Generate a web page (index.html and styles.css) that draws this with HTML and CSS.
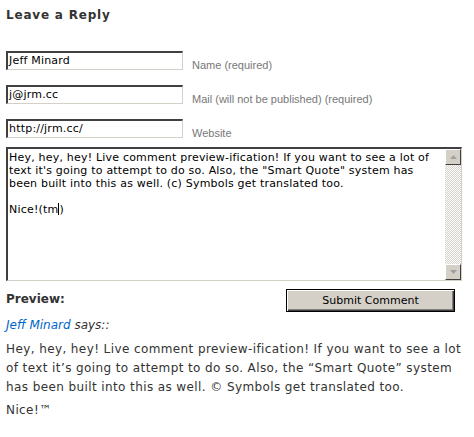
FILE: index.html
```html
<!DOCTYPE html>
<html>
<head>
<meta charset="utf-8">
<link rel="stylesheet" href="styles.css">
</head>
<body>
<div class="wrap">
  <h3 class="title">Leave a Reply</h3>
  <div class="row">
    <div class="field">Jeff Minard</div>
    <span class="label">Name (required)</span>
  </div>
  <div class="row">
    <div class="field">j@jrm.cc</div>
    <span class="label">Mail (will not be published) (required)</span>
  </div>
  <div class="row">
    <div class="field">http://jrm.cc/</div>
    <span class="label">Website</span>
  </div>
  <div class="textarea">
    <div class="ta-text">Hey, hey, hey! Live comment preview-ification! If you want to see a lot of text it's going to attempt to do so. Also, the "Smart Quote" system has been built into this as well. (c) Symbols get translated too.<br><br>Nice!(tm<span class="caret"></span>)</div>
    <div class="scrollbar">
      <div class="sb-btn"><svg width="7" height="4" viewBox="0 0 7 4"><path d="M3.5 0 L7 4 L0 4 Z" fill="#a0a0a0"/></svg></div>
      <div class="sb-track"></div>
      <div class="sb-btn"><svg width="7" height="4" viewBox="0 0 7 4"><path d="M0 0 L7 0 L3.5 4 Z" fill="#a0a0a0"/></svg></div>
    </div>
  </div>
  <div class="preview-bar">
    <h4 class="preview-title">Preview:</h4>
    <div class="submit"><span>Submit Comment</span></div>
  </div>
  <p class="cite"><a class="author">Jeff Minard</a> says::</p>
  <p class="body">Hey, hey, hey! Live comment preview-ification! If you want to see a lot of text it’s going to attempt to do so. Also, the “Smart Quote” system has been built into this as well. © Symbols get translated too.</p>
  <p class="body">Nice!™</p>
</div>
</body>
</html>
```
FILE: styles.css
```css
html, body {
  margin: 0;
  padding: 0;
  background: #fff;
}
.wrap {
  padding: 0 6px;
  font-family: "DejaVu Sans", Verdana, sans-serif;
  color: #333;
}
.title {
  margin: 0;
  padding-top: 8px;
  font-size: 12px;
  line-height: 15px;
  font-weight: bold;
  letter-spacing: 0.8px;
  color: #333;
}
.row {
  display: flex;
  align-items: flex-end;
  margin-top: 15px;
}
.title + .row {
  margin-top: 28px;
}
.field {
  box-sizing: border-box;
  width: 177px;
  height: 19px;
  border-style: solid;
  border-width: 2px 1px 1px 2px;
  border-color: #404040 #d4d0c8 #d4d0c8 #404040;
  font-family: "DejaVu Sans", sans-serif;
  font-size: 11px;
  letter-spacing: 0.2px;
  line-height: 15px;
  padding-left: 1px;
  color: #000;
}
.label {
  margin-left: 9px;
  font-family: "Liberation Sans", Arial, sans-serif;
  font-size: 11px;
  line-height: 13px;
  color: #777;
  position: relative;
  top: 2px;
}
.textarea {
  box-sizing: border-box;
  margin-top: 9px;
  width: 456px;
  height: 134px;
  display: flex;
  border-style: solid;
  border-width: 2px 1px 1px 2px;
  border-color: #404040 #d4d0c8 #d4d0c8 #404040;
}
.ta-text {
  flex: 1;
  padding: 2px 2px 0 1px;
  font-family: "DejaVu Sans", sans-serif;
  font-size: 11px;
  letter-spacing: 0.2px;
  line-height: 13px;
  color: #000;
}
.caret {
  display: inline-block;
  width: 1px;
  height: 12px;
  background: #000;
  vertical-align: -2px;
}
.scrollbar {
  width: 16px;
  display: flex;
  flex-direction: column;
}
.sb-btn {
  box-sizing: border-box;
  height: 16px;
  background: #d4d0c8;
  border-style: solid;
  border-width: 1px;
  border-color: #fff #404040 #404040 #fff;
  display: flex;
  align-items: center;
  justify-content: center;
}
.sb-track {
  flex: 1;
  background-color: #e8e6e2;
  background-image: repeating-conic-gradient(#d4d0c8 0 25%, #fff 0 50%);
  background-size: 2px 2px;
}
.preview-bar {
  display: flex;
  justify-content: space-between;
  align-items: flex-start;
  margin-top: 8px;
}
.preview-title {
  margin: 0;
  padding-top: 3px;
  font-size: 12px;
  line-height: 15px;
  font-weight: bold;
  color: #333;
}
.submit {
  box-sizing: border-box;
  width: 169px;
  height: 23px;
  margin-right: 13px;
  border: 1px solid #000;
  background: #d4d0c8;
  box-shadow: inset 1px 1px 0 #fff, inset -1px -1px 0 #404040, inset -2px -2px 0 #808080;
  display: flex;
  align-items: center;
  justify-content: center;
  font-family: "DejaVu Sans", sans-serif;
  font-size: 11px;
  color: #000;
}
.cite {
  margin: 6px 0 0;
  font-size: 12px;
  line-height: 14px;
  font-style: italic;
  color: #333;
}
.author {
  color: #06c;
}
.body {
  margin: 8px 0 0;
  font-size: 12px;
  letter-spacing: 0.4px;
  line-height: 19px;
  color: #333;
}
.body + .body {
  margin-top: 4px;
}
```
